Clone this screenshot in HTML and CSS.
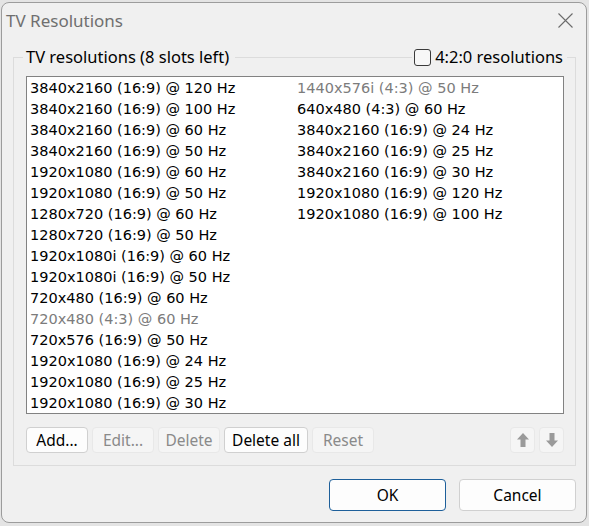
FILE: index.html
```html
<!DOCTYPE html>
<html lang="en">
<head>
  <meta charset="UTF-8" />
  <title>TV Resolutions</title>
  <link rel="stylesheet" href="styles.css">
</head>
<body>

  <div class="dialog">
    <div class="titlebar">
      <span class="title">TV Resolutions</span>
      <svg class="close" width="15" height="15" viewBox="0 0 15 15">
        <path d="M0.5 0.5 L14.5 14.5 M14.5 0.5 L0.5 14.5" stroke="#6b6b6b" stroke-width="1.1" fill="none"/>
      </svg>
    </div>

    <fieldset class="group">
      <legend class="group-head">
        <span>TV resolutions (8 slots left)</span>
        <span class="head-line"></span>
        <label class="check"><span class="box"></span>4:2:0 resolutions</label>
      </legend>

      <ul class="modes">
        <li>3840x2160 (16:9) @ 120 Hz</li>
        <li>3840x2160 (16:9) @ 100 Hz</li>
        <li>3840x2160 (16:9) @ 60 Hz</li>
        <li>3840x2160 (16:9) @ 50 Hz</li>
        <li>1920x1080 (16:9) @ 60 Hz</li>
        <li>1920x1080 (16:9) @ 50 Hz</li>
        <li>1280x720 (16:9) @ 60 Hz</li>
        <li>1280x720 (16:9) @ 50 Hz</li>
        <li>1920x1080i (16:9) @ 60 Hz</li>
        <li>1920x1080i (16:9) @ 50 Hz</li>
        <li>720x480 (16:9) @ 60 Hz</li>
        <li class="native">720x480 (4:3) @ 60 Hz</li>
        <li>720x576 (16:9) @ 50 Hz</li>
        <li>1920x1080 (16:9) @ 24 Hz</li>
        <li>1920x1080 (16:9) @ 25 Hz</li>
        <li>1920x1080 (16:9) @ 30 Hz</li>
        <li class="native">1440x576i (4:3) @ 50 Hz</li>
        <li>640x480 (4:3) @ 60 Hz</li>
        <li>3840x2160 (16:9) @ 24 Hz</li>
        <li>3840x2160 (16:9) @ 25 Hz</li>
        <li>3840x2160 (16:9) @ 30 Hz</li>
        <li>1920x1080 (16:9) @ 120 Hz</li>
        <li>1920x1080 (16:9) @ 100 Hz</li>
      </ul>

      <div class="tools">
        <button class="btn w-small">Add...</button>
        <button class="btn w-small" disabled>Edit...</button>
        <button class="btn w-small" disabled>Delete</button>
        <button class="btn w-wide">Delete all</button>
        <button class="btn w-small" disabled>Reset</button>
        <span class="grow"></span>
        <button class="btn arrow" disabled>
          <svg width="12" height="14" viewBox="0 0 12 14"><path d="M6 0 L12 6.5 L8.5 6.5 L8.5 14 L3.5 14 L3.5 6.5 L0 6.5 Z" fill="#9a9a9a"/></svg>
        </button>
        <button class="btn arrow" disabled>
          <svg width="12" height="14" viewBox="0 0 12 14"><path d="M6 14 L12 7.5 L8.5 7.5 L8.5 0 L3.5 0 L3.5 7.5 L0 7.5 Z" fill="#9a9a9a"/></svg>
        </button>
      </div>
    </fieldset>

    <div class="footer">
      <button class="btn big default">OK</button>
      <button class="btn big">Cancel</button>
    </div>
  </div>

</body>
</html>
```

FILE: styles.css
```css
body {
  margin: 0;
  padding: 2px 2px 3px 1px;
  background-color: #e4e4e4;
  font-family: 'Noto Sans', sans-serif;
  color: #000;
}

.dialog {
  width: 586px;
  box-sizing: border-box;
  border: 1px solid #9c9c9c;
  border-radius: 8px;
  background-color: #f0f0f0;
  padding: 0 10px 11px 11px;
}

.titlebar {
  height: 34px;
  display: flex;
  align-items: center;
  justify-content: space-between;
  margin-left: -7px;
  margin-right: -2px;
}

.title {
  font-size: 17px;
  color: #6f6f6f;
}

.close {
  margin-right: 5px;
}

/* group box */
.group {
  min-width: 0;
  margin: 9px 0 0 0;
  padding: 8px 11px 12px 12px;
  border: 1px solid #dcdcdc;
}

.group-head {
  width: 544px;
  box-sizing: border-box;
  margin-left: -3px;
  padding: 0 4px 0 3px;
  display: flex;
  align-items: center;
  height: 22px;
  font-size: 16.5px;
  line-height: 22px;
}

.head-line {
  flex: 1;
  height: 1px;
  margin: 0 2px 0 6px;
  background-color: #dcdcdc;
}

.check {
  display: flex;
  align-items: center;
}

.box {
  width: 15px;
  height: 15px;
  border: 1px solid #3a3a3a;
  border-radius: 3px;
  background-color: #f7f7f7;
  margin-right: 4px;
}

/* resolution list */
.modes {
  list-style: none;
  margin: 0;
  padding: 1px 0 0 3px;
  height: 338px;
  box-sizing: border-box;
  border: 1px solid #828282;
  background-color: #fff;
  display: grid;
  grid-auto-flow: column;
  grid-template-rows: repeat(16, 21px);
  grid-template-columns: 267px 267px;
  align-content: start;
  font-family: 'DejaVu Sans', sans-serif;
  font-size: 14.5px;
  line-height: 21px;
}

.modes .native {
  color: #7c7c7c;
}

/* buttons */
.tools {
  display: flex;
  gap: 4px;
  margin-top: 13px;
}

.grow {
  flex: 1;
}

.btn {
  font-family: 'Noto Sans', sans-serif;
  font-size: 15.5px;
  color: #000;
  background-color: #fdfdfd;
  border: 1px solid #d0d0d0;
  border-radius: 4px;
  height: 26px;
  padding: 0;
  display: flex;
  align-items: center;
  justify-content: center;
}

.btn:disabled {
  color: #8a8a8a;
  background-color: #f5f5f5;
  border-color: #e8e8e8;
}

.w-small {
  width: 62px;
}

.w-wide {
  width: 84px;
}

.arrow {
  width: 25px;
}

.footer {
  display: flex;
  justify-content: flex-end;
  gap: 13px;
  margin-top: 13px;
}

.big {
  width: 117px;
  height: 32px;
}

.default {
  border-color: #1d5f9a;
}
```
